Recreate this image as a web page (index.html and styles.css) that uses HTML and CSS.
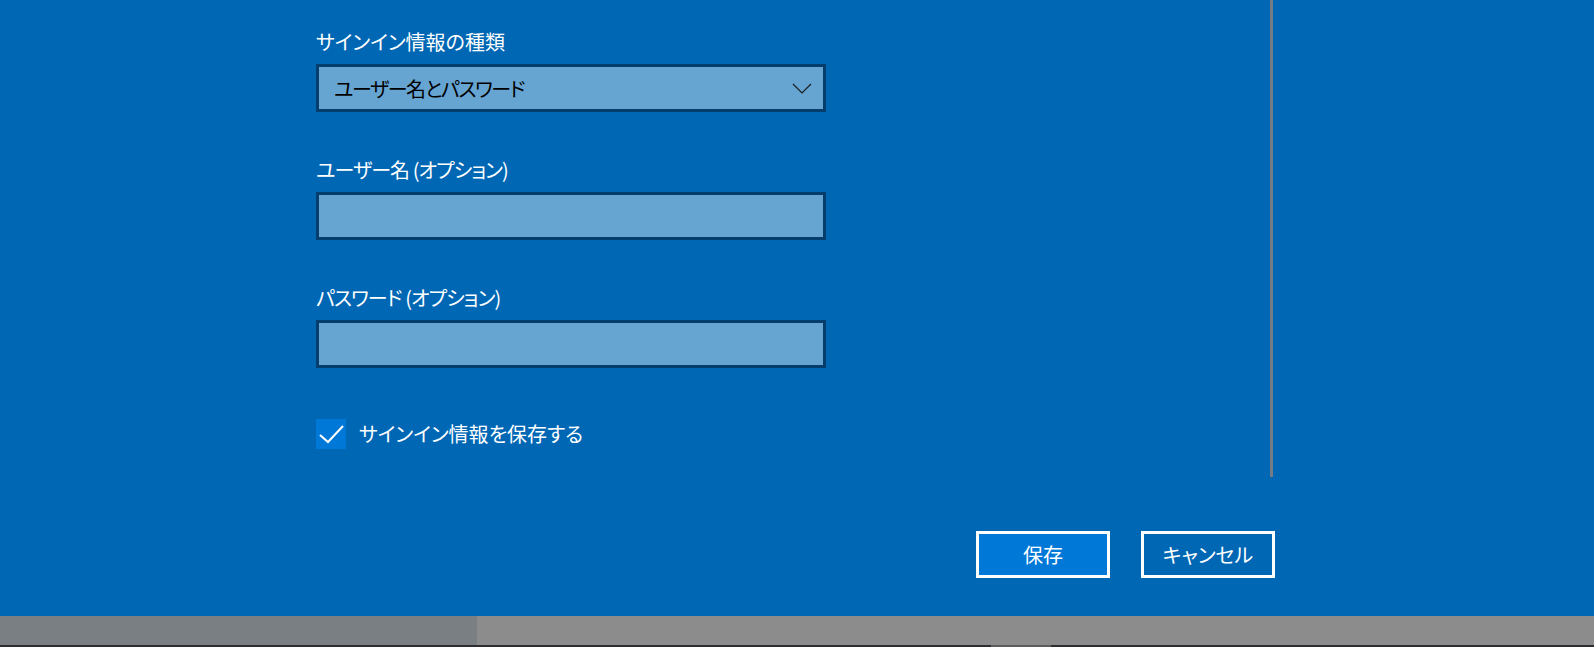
FILE: index.html
```html
<!DOCTYPE html>
<html lang="ja">
<head>
<meta charset="utf-8">
<title>サインイン情報</title>
<link rel="stylesheet" href="styles.css">
</head>
<body>
<div class="window">
  <div class="scroll-area">
    <div class="form">
      <div class="group">
        <div class="label">サインイン情報の種類</div>
        <div class="field combo">
          <span class="combo-text">ユーザー名とパスワード</span>
          <svg class="chevron" width="20" height="11" viewBox="0 0 20 11"><path d="M1 1 L10 10 L19 1" fill="none" stroke="#1b1b1b" stroke-width="1.2"/></svg>
        </div>
      </div>
      <div class="group">
        <div class="label label-kana">ユーザー名 (オプション)</div>
        <div class="field"></div>
      </div>
      <div class="group">
        <div class="label label-kana">パスワード (オプション)</div>
        <div class="field"></div>
      </div>
      <div class="check-row">
        <span class="checkbox">
          <svg width="30" height="30" viewBox="0 0 30 30"><path d="M4 16 L12 23 L27 7" fill="none" stroke="#ffffff" stroke-width="2"/></svg>
        </span>
        <span class="check-label">サインイン情報を保存する</span>
      </div>
    </div>
    <div class="scrollbar"></div>
  </div>
  <div class="footer">
    <button class="btn btn-primary">保存</button>
    <button class="btn">キャンセル</button>
  </div>
</div>
<div class="taskbar">
  <div class="tb-row">
    <div class="tb-left"></div>
    <div class="tb-right"></div>
  </div>
  <div class="tb-line">
    <div class="tb-mark"></div>
  </div>
</div>
</body>
</html>
```

FILE: styles.css
```css
* { box-sizing: border-box; }
html, body {
  margin: 0;
  padding: 0;
  width: 1594px;
  height: 647px;
  overflow: hidden;
}
body {
  background: #0067b4;
  font-family: "Noto Sans CJK JP", "Noto Sans", sans-serif;
  font-feature-settings: "palt";
  color: #ffffff;
}
.window {
  height: 616px;
  display: flex;
  flex-direction: column;
}
.scroll-area {
  height: 477px;
  display: flex;
  flex-direction: row;
}
.form {
  width: 1270px;
  padding-left: 316px;
  padding-top: 28px;
}
.group {
  width: 510px;
  height: 128px;
}
.label {
  height: 28px;
  line-height: 28px;
  font-size: 20px;
  white-space: nowrap;
}
.label-kana { letter-spacing: -0.9px; }
.field {
  margin-top: 8px;
  width: 510px;
  height: 48px;
  background: #66a5d2;
  border: 3px solid #053e6c;
}
.combo {
  display: flex;
  align-items: center;
  justify-content: space-between;
  padding: 0 11px 0 15px;
  color: #000000;
  font-size: 20px;
}
.combo-text { letter-spacing: -1.4px; }
.chevron { display: block; margin-top: 1px; }
.check-row {
  margin-top: 7px;
  display: flex;
  align-items: center;
  height: 30px;
}
.checkbox {
  width: 30px;
  height: 30px;
  background: #0078d7;
  display: block;
}
.checkbox svg { display: block; }
.check-label {
  margin-left: 13px;
  font-size: 20px;
  line-height: 28px;
}
.scrollbar {
  width: 3px;
  height: 477px;
  background: #737c86;
}
.footer {
  display: flex;
  justify-content: flex-end;
  gap: 31px;
  padding-right: 319px;
  margin-top: 54px;
}
.btn {
  width: 134px;
  height: 47px;
  border: 3px solid #ffffff;
  background: transparent;
  color: #ffffff;
  font-family: "Noto Sans CJK JP", "Noto Sans", sans-serif;
  font-feature-settings: "palt";
  font-size: 20px;
  padding: 0;
  margin: 0;
}
.btn-primary { background: #0078d7; }
.taskbar {
  height: 31px;
  display: flex;
  flex-direction: column;
}
.tb-row {
  height: 29px;
  display: flex;
}
.tb-left {
  width: 477px;
  background: #7a7f83;
}
.tb-right {
  flex: 1;
  background: #8c8c8c;
}
.tb-line {
  height: 2px;
  background: #2c2e31;
  padding-left: 991px;
}
.tb-mark {
  width: 60px;
  height: 2px;
  background: #5d5d5d;
}
```
